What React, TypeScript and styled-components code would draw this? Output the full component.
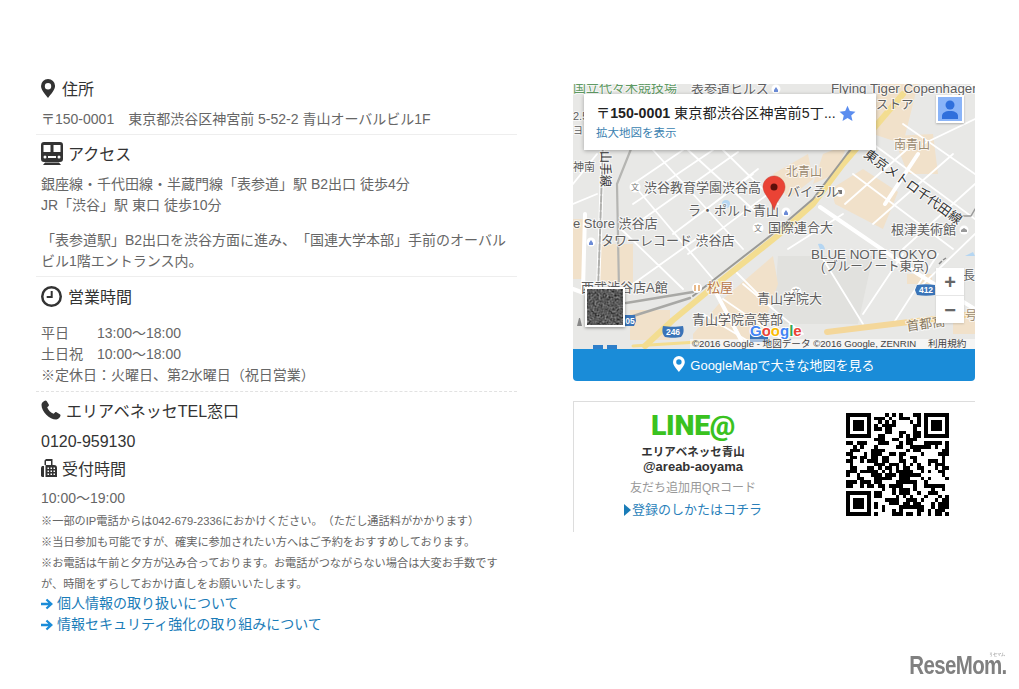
import styled, { createGlobalStyle } from 'styled-components';

const GlobalStyle = createGlobalStyle`
  html, body {
    margin: 0;
    padding: 0;
    background: #fff;
    font-family: "Liberation Sans", "Noto Sans CJK JP", sans-serif;
    text-spacing-trim: space-all;
  }
`;

const Page = styled.div`
  position: relative;
  width: 1019px;
  height: 689px;
  overflow: hidden;
  box-sizing: border-box;
  padding: 77px 0 0 36px;
  display: flex;
  align-items: flex-start;
  gap: 56px;
`;

const LeftColumn = styled.div`
  width: 481px;
  flex: none;
`;

const RightColumn = styled.div`
  width: 402px;
  flex: none;
  padding-top: 7px;
`;

const Section = styled.section<{ $pad: number; $after?: number; $dashed?: boolean; $last?: boolean }>`
  padding: 0 5px ${({ $pad }) => $pad}px;
  border-bottom: ${({ $last, $dashed }) => ($last ? 'none' : `1px ${$dashed ? 'dashed #e2e2e2' : 'solid #eee'}`)};
  margin-bottom: ${({ $after }) => $after ?? 7}px;
`;

const Heading = styled.h3<{ $top?: number; $gap?: number }>`
  display: flex;
  align-items: center;
  gap: ${({ $gap }) => $gap ?? 6}px;
  height: 24px;
  box-sizing: border-box;
  padding-bottom: 2px;
  margin: ${({ $top }) => $top ?? 0}px 0 0;
  font-size: 16px;
  font-weight: 400;
  color: #333;

  svg {
    flex: none;
    fill: #333;
  }
`;

const Body = styled.p<{ $top: number }>`
  margin: ${({ $top }) => $top}px 0 0;
  font-size: 14px;
  line-height: 21px;
  color: #666;
`;

const HoursRow = styled.span`
  display: flex;
`;

const HoursLabel = styled.span`
  width: 56px;
`;

const Phone = styled.div`
  margin-top: 7px;
  font-size: 16px;
  line-height: 24px;
  color: #333;
`;

const Notes = styled.div`
  margin-top: 2px;
  font-size: 11.2px;
  line-height: 21px;
  color: #666;

  p {
    margin: 0;
  }
`;

const LinkList = styled.div`
  margin-top: -2px;
`;

const TextLink = styled.a`
  display: flex;
  align-items: center;
  gap: 4px;
  font-size: 14px;
  line-height: 21px;
  color: #1a7cb8;

  svg {
    fill: #1a8cd8;
  }
`;

const MapFrame = styled.div`
  position: relative;
  height: 265px;
  overflow: hidden;
  background: #e8e8e6;

  > svg {
    display: block;
  }
`;

const InfoCard = styled.div`
  position: absolute;
  left: 11px;
  top: 10px;
  width: 292px;
  height: 56px;
  box-sizing: border-box;
  padding: 10px 12px;
  background: #fff;
  box-shadow: 0 1px 4px rgba(0, 0, 0, 0.3);
`;

const InfoTitle = styled.div`
  display: flex;
  align-items: center;
  gap: 3px;
  font-size: 14.2px;
  line-height: 18px;
  color: #222;
  white-space: nowrap;

  b {
    font-weight: 700;
  }
`;

const InfoLink = styled.div`
  margin-top: 4px;
  font-size: 11.5px;
  line-height: 14px;
  color: #3a7fb0;
`;

const Pegman = styled.div`
  position: absolute;
  left: 363px;
  top: 11px;
  width: 28px;
  height: 28px;
  box-sizing: border-box;
  border: 2px solid #fff;
  background: #8ab4f8;
  box-shadow: 0 1px 2px rgba(0, 0, 0, 0.25);

  svg {
    display: block;
  }
`;

const ZoomBox = styled.div`
  position: absolute;
  left: 363px;
  top: 184px;
  width: 28px;
  height: 55px;
  background: #fff;
  box-shadow: 0 1px 2px rgba(0, 0, 0, 0.15);
  display: flex;
  flex-direction: column;
`;

const ZoomButton = styled.div`
  flex: 1;
  display: flex;
  align-items: center;
  justify-content: center;
  font: 700 20px/1 "Liberation Sans", sans-serif;
  color: #666;

  & + & {
    border-top: 1px solid #e6e6e6;
  }
`;

const SatelliteThumb = styled.div`
  position: absolute;
  left: 12px;
  top: 203px;
  width: 40px;
  height: 40px;
  box-sizing: border-box;
  border: 2px solid #fff;
  box-shadow: 0 1px 3px rgba(0, 0, 0, 0.4);
  background: #5c5c59;

  svg {
    display: block;
  }
`;

const MapButton = styled.a`
  display: flex;
  align-items: center;
  justify-content: center;
  gap: 5px;
  height: 32px;
  box-sizing: border-box;
  padding-bottom: 2px;
  background: #1a8cd8;
  border-radius: 0 0 4px 4px;
  color: #fff;
  font-size: 13px;

  svg {
    fill: #fff;
  }
`;

const LineBox = styled.div`
  margin-top: 20px;
  height: 131px;
  box-sizing: border-box;
  border-top: 1px solid #ddd;
  border-left: 1px solid #ddd;
  display: flex;
`;

const LineInfo = styled.div`
  width: 238px;
  flex: none;
  display: flex;
  flex-direction: column;
  align-items: center;
  padding-top: 7px;
`;

const LineLogo = styled.div`
  font: 900 28.500px/34px Roboto, "Liberation Sans", sans-serif;
  color: #3ac21f;
  letter-spacing: -0.3px;
`;

const LineName = styled.div`
  margin-top: 2px;
  font-size: 11.5px;
  font-weight: 700;
  line-height: 14.5px;
  color: #333;
  text-align: center;

  span {
    font-size: 13px;
  }
`;

const LineCaption = styled.div`
  margin-top: 6px;
  font-size: 12px;
  line-height: 16px;
  color: #999;
`;

const LineLink = styled.a`
  margin-top: 5px;
  display: flex;
  align-items: center;
  gap: 1px;
  font-size: 13px;
  line-height: 18px;
  color: #2a7fba;

  svg {
    fill: #1a7cb8;
  }
`;

const QrWrap = styled.div`
  padding: 11px 0 0 34px;

  svg {
    display: block;
  }
`;

const Watermark = styled.div`
  position: absolute;
  right: 12px;
  top: 653px;
  font: 700 25px/25px "Liberation Sans", sans-serif;
  letter-spacing: -0.8px;
  color: #808080;
  transform: scaleX(0.82);
  transform-origin: right center;
`;

const WatermarkKana = styled.span`
  position: absolute;
  right: 2px;
  top: -2px;
  font-size: 5px;
  line-height: 6px;
  font-weight: 400;
  letter-spacing: 0;
`;

const PinIcon = ({ size = 19 }: { size?: number }) => (
  <svg width={size * 0.74} height={size} viewBox="0 0 14 19">
    <path fillRule="evenodd" d="M7 0a7 7 0 0 0-7 7c0 4 4 8 7 12 3-4 7-8 7-12a7 7 0 0 0-7-7zm0 4a3.2 3.2 0 1 1 0 6.400a3.2 3.2 0 0 1 0-6.400z" />
  </svg>
);

const TrainIcon = () => (
  <svg width="22" height="24" viewBox="0 0 22 24">
    <path fillRule="evenodd" d="M3 1h16a3 3 0 0 1 3 3v14a3 3 0 0 1-3 3H3a3 3 0 0 1-3-3V4a3 3 0 0 1 3-3zM2.500 4v7h7V4zm10 0v7h7V4zM4 14.500a1.500 1.500 0 1 0 0 3 1.500 1.500 0 0 0 0-3zm14 0a1.500 1.500 0 1 0 0 3 1.500 1.500 0 0 0 0-3zM7 15v2h8v-2z" />
    <path d="M4 21.500h14l2 2.500H2z" />
  </svg>
);

const ClockIcon = () => (
  <svg width="21" height="21" viewBox="0 0 21 21">
    <path fillRule="evenodd" d="M10.500 0a10.500 10.500 0 1 1 0 21 10.500 10.500 0 0 1 0-21zm0 2.500a8 8 0 1 0 0 16 8 8 0 0 0 0-16z" />
    <path d="M9.700 5h2v7h-6v-2h4z" />
  </svg>
);

const PhoneIcon = () => (
  <svg width="20" height="20" viewBox="0 0 20 20">
    <path d="M4.500 0.500c.6 0 1 .3 1.300.8l2 3.200c.3.500.2 1.100-.2 1.500L6.200 7.300c.8 2.600 3.700 5.600 6.400 6.500l1.400-1.400c.4-.4 1-.5 1.500-.2l3.300 2c.5.300.8.800.7 1.400-.2 1.500-1.900 3.900-4.300 3.900C8.500 19.500.5 11.500.5 5c0-2.300 2.500-4.300 4-4.500z" />
  </svg>
);

const FaxIcon = () => (
  <svg width="16" height="18" viewBox="0 0 16 18">
    <path fillRule="evenodd" d="M3.500 6V1.500L5 0h6.500v6H13a3 3 0 0 1 3 3v9H4.500V6zM5 2v4h5V2zM6.500 8.500v1.500H8V8.500zm3 0v1.500H11V8.500zm3 0v1.500H14V8.500zm-6 3V13H8v-1.500zm3 0V13H11v-1.500zm3 0V13H14v-1.500zm-6 3V16H8v-1.500zm3 0V16H11v-1.500zm3 0V16H14v-1.500z" />
    <path d="M0 8.500 1 7h2v11H1l-1-1z" />
  </svg>
);

const ArrowIcon = () => (
  <svg width="12" height="12" viewBox="0 0 12 12">
    <path d="M6.200 0.800 12 6l-5.800 5.200-1.500-1.500L7.300 7.300H0V4.700h7.300L4.700 2.300z" />
  </svg>
);

const StarIcon = () => (
  <svg width="17" height="17" viewBox="0 0 16 16">
    <path fill="#5b8def" d="M8 .8l2.200 4.900 5.300.6-4 3.500 1.200 5.200L8 12.300 3.300 15l1.200-5.200-4-3.500 5.300-.6z" />
  </svg>
);

const TriangleIcon = () => (
  <svg width="7" height="12" viewBox="0 0 7 12">
    <path d="M0 0l7 6-7 6z" />
  </svg>
);

type MapText = {
  x: number;
  y: number;
  text: string;
  size?: number;
  fill?: string;
};

const mapLabels: MapText[] = [
  { x: 0, y: 8, text: '国立代々木競技場', fill: '#5f9a63' },
  { x: 118, y: 9, text: '表参道ヒルズ' },
  { x: 258, y: 9, text: 'Flying Tiger Copenhagen', size: 13.3 },
  { x: 303, y: 25, text: 'ストア', size: 12.5 },
  { x: 0, y: 36, text: '2.5', size: 11 },
  { x: 0, y: 50, text: 'ヨ', size: 10 },
  { x: 321, y: 65, text: '南青山', size: 12, fill: '#9a8a70' },
  { x: 0, y: 87, text: '神南', size: 11 },
  { x: 213, y: 92, text: '北青山', size: 12, fill: '#9a8a70' },
  { x: 71, y: 108, text: '渋谷教育学園渋谷高' },
  { x: 214, y: 112, text: 'バイラル' },
  { x: 115, y: 131, text: 'ラ・ポルト青山' },
  { x: 0, y: 144, text: 'e Store 渋谷店' },
  { x: 195, y: 148, text: '国際連合大' },
  { x: 318, y: 150, text: '根津美術館' },
  { x: 28, y: 161, text: 'タワーレコード 渋谷店' },
  { x: 238, y: 175, text: 'BLUE NOTE TOKYO', size: 13.4 },
  { x: 248, y: 187, text: '(ブルーノート東京)', size: 12.5 },
  { x: 390, y: 196, text: '長', size: 12 },
  { x: 8, y: 208, text: '西武渋谷店A館' },
  { x: 134, y: 208, text: '松屋', fill: '#b9794a' },
  { x: 184, y: 219, text: '青山学院大' },
  { x: 392, y: 236, text: '号', size: 12, fill: '#9a8a70' },
  { x: 119, y: 240, text: '青山学院高等部' },
];

const thinRoads =
  'M60 100 110 66M60 120 140 66M70 135 165 68M100 150 180 90M115 170 195 110M60 200 130 150M140 120 185 85' +
  'M80 66 170 165M115 66 185 130M60 100 140 195M150 66 205 120M48 145 110 205M0 100 24 70M0 120 24 110' +
  'M272 120 340 60M300 140 380 70M330 165 402 100M345 205 402 150M300 60 402 135M330 40 402 90M280 90 380 165' +
  'M350 60 402 35M290 230 330 170M320 240 365 170M250 175 290 240M160 185 200 225M215 165 270 130M380 10 402 0' +
  'M150 215 210 256M170 200 230 250M130 230 180 260';

const wideRoads = 'M247 123 345 190 402 225M12 130 10 205M140 203 168 256M0 205 27 215M312 120 345 70';

const Roads = () => (
  <g fill="none" strokeLinecap="round" strokeLinejoin="round">
    <path d={thinRoads} stroke="#fff" strokeWidth="1.800" />
    <path d={wideRoads} stroke="#fff" strokeWidth="4" />
    <path d="M30 56 27 150 25 205" stroke="#fff" strokeWidth="4" />
    <path d="M30 56 27 150 25 205" stroke="#b0b0ad" strokeWidth="2" strokeDasharray="6 2" />
    <path d="M60 60 44 100 46 205" stroke="#b5b5b2" strokeWidth="2.200" />
    <path d="M53 219 120 208" stroke="#a8a8a5" strokeWidth="2.500" />
    <path d="M57 233 117 214" stroke="#a8a8a5" strokeWidth="2.500" />
    <path d="M72 262 100 236 140 203 203 153 240 120 270 80 307 37 330 10" stroke="#f3dd90" strokeWidth="6" />
    <path d="M120 212 197 152 240 115 274 70 300 38" stroke="#9a9a96" strokeWidth="2" />
    <path d="M254 248 402 230" stroke="#f4d79a" strokeWidth="6" />
    <path d="M60 262 125 258" stroke="#f3dd90" strokeWidth="3" />
    <path d="M380 132H398L402 125" stroke="#999" strokeWidth="1.500" />
  </g>
);

const Blocks = () => (
  <g fill="#f1e1ca">
    <path d="M0 135h10v60H0z" />
    <path d="M28 160h32v40H26z" />
    <path d="M120 250 150 215 200 172 205 200 185 256H120z" />
    <path d="M258 105 290 85 325 108 310 145 262 120z" />
    <path d="M250 70 275 60 262 90 240 100z" />
    <path d="M305 0H345L330 60 300 50z" />
    <path d="M320 52 360 50 365 90 335 90z" />
    <path d="M334 190h25v10h-25z" />
    <path d="M380 235h22v15h-22z" />
    <path d="M57 226h40v30H57z" />
    <path d="M200 90 235 70 240 95 215 115z" />
  </g>
);

const MapIcons = () => (
  <g>
    {[
      [62, 103],
      [185, 144],
      [223, 208],
    ].map(([x, y]) => (
      <g key={x}>
        <circle cx={x} cy={y} r="5.500" fill="#fff" />
        <text x={x} y={y + 3} fontSize="8" fill="#777" textAnchor="middle">文</text>
      </g>
    ))}
    <circle cx="267" cy="108" r="5" fill="#fff" />
    <rect x="265" y="106" width="4" height="4" fill="#777" />
    <circle cx="124" cy="204" r="5" fill="#fff" />
    <path d="M122 201v6M126 201v6" stroke="#d98a3d" strokeWidth="1.200" />
    {[
      [213, 128],
      [18, 158],
      [203, 5],
    ].map(([x, y]) => (
      <g key={x}>
        <circle cx={x} cy={y} r="4.500" fill="#fff" />
        <path d={`M${x - 2} ${y + 1}l2-3 2 3v2h-4z`} fill="#6b8bd6" />
      </g>
    ))}
    <circle cx="391" cy="146" r="4.500" fill="#fff" />
    <path d="M388 146l3-2 3 2v2h-6z" fill="#999" />
    <path d="M366 180l3-3M370 176l3-2" stroke="#888" strokeWidth="1.500" />
    <path d="M245 160c3-1 6 0 7 5l-4 3z M392 172l8-4 2 4z" fill="#b5d6f2" />
    <path d="M4 242h5l-2-8h-1z" fill="#888" />
    <rect x="20" y="261" width="10" height="6" fill="#2f7fc9" />
    <rect x="34" y="261" width="10" height="6" fill="#2f7fc9" />
  </g>
);

const Shields = () => (
  <g fontSize="8.500" fontWeight="700" fill="#fff" textAnchor="middle">
    <path d="M90 242c6 1 14 1 20 0 1 4 1 8-2 11-4 1-12 1-16 0-3-3-3-7-2-11z" fill="#3a74b8" />
    <text x="100" y="251">246</text>
    <path d="M344 201c6-1 12-1 18 0v10c-6 1-12 1-18 0l-2-5z" fill="#3a74b8" />
    <text x="353" y="209">412</text>
    <path d="M52 231h10l1 6-2 5h-9z" fill="#3a74b8" />
    <text x="57" y="240">05</text>
    <path d="M177 250h18v8h-18z" fill="#3a74b8" />
  </g>
);

const MapDrawing = () => (
  <svg width="402" height="265" viewBox="0 0 402 265" fontFamily={'"Liberation Sans", "Noto Sans CJK JP", sans-serif'}>
    <rect width="402" height="265" fill="#e8e8e6" />
    <path d="M205 172H300L285 240H200z" fill="#e1e1de" />
    <Blocks />
    <circle cx="153" cy="120" r="4" fill="#b5d6f2" />
    <Roads />
    <MapIcons />
    <Shields />
    <g stroke="#fff" strokeWidth="2" paintOrder="stroke" strokeOpacity="0.7">
      {mapLabels.map((l) => (
        <text key={l.text} x={l.x} y={l.y} fontSize={l.size ?? 13} fill={l.fill ?? '#5e5e5e'}>
          {l.text}
        </text>
      ))}
      <text transform="translate(290 72) rotate(36)" fontSize="13" fill="#333">東京メトロ千代田線</text>
      <text transform="translate(28 67) rotate(90)" fontSize="12" fill="#333">山手線</text>
      <text transform="translate(334 247) rotate(-8)" fontSize="13" fill="#8a7a5f">首都高</text>
    </g>
    <path d="M201 92c6 0 11 5 11 11 0 7-8 12-11 23-3-11-11-16-11-23 0-6 5-11 11-11z" fill="#ea4335" stroke="#c5392c" strokeWidth="0.500" />
    <circle cx="201" cy="103" r="3.500" fill="#5c0f0a" />
    <text x="177" y="252" fontSize="15" fontWeight="700" stroke="#fff" strokeWidth="2" paintOrder="stroke">
      <tspan fill="#4285f4">G</tspan>
      <tspan fill="#ea4335">o</tspan>
      <tspan fill="#fbbc05">o</tspan>
      <tspan fill="#4285f4">g</tspan>
      <tspan fill="#34a853">l</tspan>
      <tspan fill="#ea4335">e</tspan>
    </text>
    <rect x="117" y="255" width="285" height="10" fill="#fff" opacity="0.55" />
    <text x="119" y="263" fontSize="9.600" fill="#444">©2016 Google - 地図データ ©2016 Google, ZENRIN</text>
    <text x="355" y="263" fontSize="9.600" fill="#444">利用規約</text>
  </svg>
);

const AerialNoise = () => (
  <svg width="36" height="36" viewBox="0 0 36 36">
    <filter id="aerial" colorInterpolationFilters="sRGB">
      <feTurbulence type="fractalNoise" baseFrequency="0.5" numOctaves="3" seed="4" />
      <feColorMatrix values="0.45 0.45 0 0 -0.1 0.45 0.45 0 0 -0.1 0.45 0.45 0 0 -0.1 0 0 0 0 1" />
    </filter>
    <rect width="36" height="36" filter="url(#aerial)" />
  </svg>
);

// stand-in modules around the three finder squares
const QR_SIZE = 29;

const isFinder = (r: number, c: number) =>
  (r < 8 && c < 8) || (r < 8 && c >= QR_SIZE - 8) || (r >= QR_SIZE - 8 && c < 8);

const qrModules = () => {
  const cells: [number, number][] = [];
  let seed = 20161;
  for (let r = 0; r < QR_SIZE; r++) {
    for (let c = 0; c < QR_SIZE; c++) {
      seed = (seed * 1103515245 + 12345) & 0x7fffffff;
      if (!isFinder(r, c) && (seed >> 12) % 100 < 52) cells.push([r, c]);
    }
  }
  return cells;
};

const Finder = ({ x, y }: { x: number; y: number }) => (
  <g transform={`translate(${x} ${y})`}>
    <path fillRule="evenodd" d="M0 0h7v7H0zM1 1v5h5V1z" />
    <rect x="2" y="2" width="3" height="3" />
  </g>
);

const QrCode = () => (
  <svg width="103" height="103" viewBox={`0 0 ${QR_SIZE} ${QR_SIZE}`} shapeRendering="crispEdges">
    <Finder x={0} y={0} />
    <Finder x={QR_SIZE - 7} y={0} />
    <Finder x={0} y={QR_SIZE - 7} />
    {qrModules().map(([r, c]) => (
      <rect key={`${r}-${c}`} x={c} y={r} width="1" height="1" />
    ))}
  </svg>
);

const App = () => {
  return (
    <Page>
      <GlobalStyle />
      <LeftColumn>
        <Section $pad={4}>
          <Heading $gap={7}>
            <PinIcon />
            住所
          </Heading>
          <Body $top={8}>〒150-0001　東京都渋谷区神宮前 5-52-2 青山オーバルビル1F</Body>
        </Section>

        <Section $pad={4} $after={8}>
          <Heading $gap={5}>
            <TrainIcon />
            アクセス
          </Heading>
          <Body $top={8}>
            銀座線・千代田線・半蔵門線「表参道」駅 B2出口 徒歩4分
            <br />
            JR「渋谷」駅 東口 徒歩10分
          </Body>
          <Body $top={14}>「表参道駅」B2出口を渋谷方面に進み、「国連大学本部」手前のオーバルビル1階エントランス内。</Body>
        </Section>

        <Section $pad={5} $dashed>
          <Heading>
            <ClockIcon />
            営業時間
          </Heading>
          <Body $top={14}>
            <HoursRow>
              <HoursLabel>平日</HoursLabel>13:00～18:00
            </HoursRow>
            <HoursRow>
              <HoursLabel>土日祝</HoursLabel>10:00～18:00
            </HoursRow>
            ※定休日：火曜日、第2水曜日（祝日営業）
          </Body>
        </Section>

        <Section $pad={0} $after={0} $last>
          <Heading $gap={5}>
            <PhoneIcon />
            エリアベネッセTEL窓口
          </Heading>
          <Phone>0120-959130</Phone>
          <Heading $top={3} $gap={5}>
            <FaxIcon />
            受付時間
          </Heading>
          <Body $top={7}>10:00～19:00</Body>
          <Notes>
            <p>※一部のIP電話からは042-679-2336におかけください。（ただし通話料がかかります）</p>
            <p>※当日参加も可能ですが、確実に参加されたい方へはご予約をおすすめしております。</p>
            <p>※お電話は午前と夕方が込み合っております。お電話がつながらない場合は大変お手数ですが、時間をずらしておかけ直しをお願いいたします。</p>
          </Notes>
          <LinkList>
            <TextLink>
              <ArrowIcon />
              個人情報の取り扱いについて
            </TextLink>
            <TextLink>
              <ArrowIcon />
              情報セキュリティ強化の取り組みについて
            </TextLink>
          </LinkList>
        </Section>
      </LeftColumn>

      <RightColumn>
        <MapFrame>
          <MapDrawing />
          <InfoCard>
            <InfoTitle>
              <span>
                〒<b>150-0001</b> 東京都渋谷区神宮前5丁...
              </span>
              <StarIcon />
            </InfoTitle>
            <InfoLink>拡大地図を表示</InfoLink>
          </InfoCard>
          <Pegman>
            <svg width="24" height="24" viewBox="0 0 24 24">
              <circle cx="12" cy="8" r="4.500" fill="#2f6fdc" />
              <path d="M4 22v-3c0-3 3-5 8-5s8 2 8 5v3z" fill="#2f6fdc" />
            </svg>
          </Pegman>
          <ZoomBox>
            <ZoomButton>+</ZoomButton>
            <ZoomButton>−</ZoomButton>
          </ZoomBox>
          <SatelliteThumb>
            <AerialNoise />
          </SatelliteThumb>
        </MapFrame>
        <MapButton>
          <PinIcon size={16} />
          GoogleMapで大きな地図を見る
        </MapButton>

        <LineBox>
          <LineInfo>
            <LineLogo>LINE@</LineLogo>
            <LineName>
              エリアベネッセ青山
              <br />
              <span>@areab-aoyama</span>
            </LineName>
            <LineCaption>友だち追加用QRコード</LineCaption>
            <LineLink>
              <TriangleIcon />
              登録のしかたはコチラ
            </LineLink>
          </LineInfo>
          <QrWrap>
            <QrCode />
          </QrWrap>
        </LineBox>
      </RightColumn>

      <Watermark>
        ReseMom.
        <WatermarkKana>リセマム</WatermarkKana>
      </Watermark>
    </Page>
  );
};

export default App;
